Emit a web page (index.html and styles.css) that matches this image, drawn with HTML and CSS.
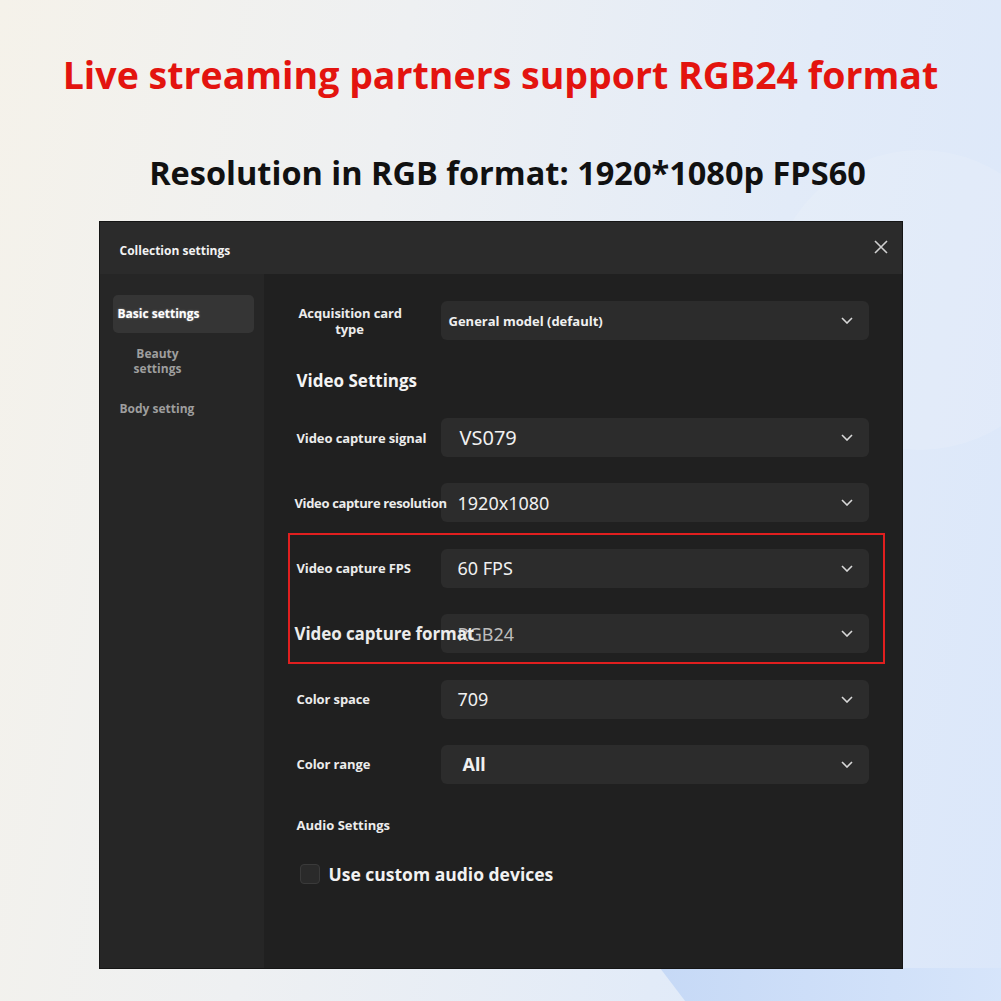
FILE: index.html
```html
<!DOCTYPE html>
<html>
<head>
<meta charset="utf-8">
<link rel="stylesheet" href="styles.css">
</head>
<body>
<div class="page">
  <div class="shape shape-a"></div>
  <div class="shape shape-b"></div>
  <h1 class="title">Live streaming partners support RGB24 format</h1>
  <h2 class="subtitle">Resolution in RGB format: 1920*1080p FPS60</h2>
  <div class="dialog">
    <div class="dialog-header">
      <span class="dialog-title">Collection settings</span>
      <svg class="close" width="14" height="14" viewBox="0 0 14 14"><path d="M1 1L13 13M13 1L1 13" stroke="#d0d0d0" stroke-width="1.6" fill="none"/></svg>
    </div>
    <div class="dialog-body">
      <div class="sidebar">
        <div class="nav-item active">Basic settings</div>
        <div class="nav-item center">Beauty<br>settings</div>
        <div class="nav-item">Body setting</div>
      </div>
      <div class="content">
        <div class="highlight"></div>
        <div class="row">
          <div class="label center">Acquisition card<br>type</div>
          <div class="select small"><span>General model (default)</span><svg class="chev" width="12" height="7" viewBox="0 0 12 7"><path d="M1 1L6 6L11 1" stroke="#d8d8d8" stroke-width="1.6" fill="none"/></svg></div>
        </div>
        <div class="section">Video Settings</div>
        <div class="rows">
          <div class="row">
            <div class="label">Video capture signal</div>
            <div class="select"><span class="large">VS079</span><svg class="chev" width="12" height="7" viewBox="0 0 12 7"><path d="M1 1L6 6L11 1" stroke="#d8d8d8" stroke-width="1.6" fill="none"/></svg></div>
          </div>
          <div class="row">
            <div class="label wide">Video capture resolution</div>
            <div class="select tight"><span>1920x1080</span><svg class="chev" width="12" height="7" viewBox="0 0 12 7"><path d="M1 1L6 6L11 1" stroke="#d8d8d8" stroke-width="1.6" fill="none"/></svg></div>
          </div>
          <div class="row">
            <div class="label">Video capture FPS</div>
            <div class="select tight"><span>60 FPS</span><svg class="chev" width="12" height="7" viewBox="0 0 12 7"><path d="M1 1L6 6L11 1" stroke="#d8d8d8" stroke-width="1.6" fill="none"/></svg></div>
          </div>
          <div class="row">
            <div class="label big">Video capture format</div>
            <div class="select tight"><span class="faded">RGB24</span><svg class="chev" width="12" height="7" viewBox="0 0 12 7"><path d="M1 1L6 6L11 1" stroke="#d8d8d8" stroke-width="1.6" fill="none"/></svg></div>
          </div>
          <div class="row">
            <div class="label">Color space</div>
            <div class="select tight"><span>709</span><svg class="chev" width="12" height="7" viewBox="0 0 12 7"><path d="M1 1L6 6L11 1" stroke="#d8d8d8" stroke-width="1.6" fill="none"/></svg></div>
          </div>
          <div class="row">
            <div class="label">Color range</div>
            <div class="select"><span class="bold">All</span><svg class="chev" width="12" height="7" viewBox="0 0 12 7"><path d="M1 1L6 6L11 1" stroke="#d8d8d8" stroke-width="1.6" fill="none"/></svg></div>
          </div>
        </div>
        <div class="audio">Audio Settings</div>
        <label class="check"><span class="box"></span><span>Use custom audio devices</span></label>
      </div>
    </div>
  </div>
</div>
</body>
</html>
```
FILE: styles.css
```css
html, body { margin: 0; padding: 0; }
body { width: 1001px; height: 1001px; overflow: hidden; }
.page {
  position: relative;
  width: 1001px;
  height: 1001px;
  background: linear-gradient(100deg, #f5f2ea 0%, #eef0f2 35%, #e2ebf8 70%, #dbe7fa 100%);
  display: flex;
  flex-direction: column;
  align-items: center;
  overflow: hidden;
  font-family: "Open Sans", Lato, sans-serif;
}
.shape { position: absolute; pointer-events: none; }
.shape-a {
  left: 660px; top: 968px; width: 380px; height: 40px;
  background: linear-gradient(90deg, #c6d9f6, #d8e6fb);
  clip-path: polygon(0 0, 100% 0, 100% 100%, 8% 100%);
}
.shape-b {
  left: 770px; top: 150px; width: 300px; height: 300px;
  border-radius: 50%;
  background: rgba(255,255,255,0.12);
}
.title {
  position: relative;
  margin: 53px 0 0;
  height: 44px;
  line-height: 44px;
  font-size: 37.5px;
  font-weight: 700;
  color: #e3140f;
}
.subtitle {
  position: relative;
  margin: 56px 0 0;
  padding-left: 14px;
  height: 40px;
  line-height: 40px;
  font-size: 32.5px;
  font-weight: 700;
  color: #111;
}
.dialog {
  position: relative;
  margin-top: 29px;
  width: 802px;
  height: 746px;
  background: #202020;
  display: flex;
  flex-direction: column;
  box-shadow: 0 0 0 1px #151515;
}
.dialog-header {
  height: 52px;
  flex: none;
  background: #2b2b2b;
  display: flex;
  align-items: center;
  justify-content: space-between;
  padding: 0 14px 0 20px;
}
.dialog-title { color: #f2f2f2; font-size: 12px; font-weight: 700; margin-top: 4px; }
.close { margin-top: -2px; }
.dialog-body { flex: 1; display: flex; }
.sidebar {
  width: 164px;
  flex: none;
  background: #262626;
  padding: 21px 10px 0 13px;
  box-sizing: border-box;
  display: flex;
  flex-direction: column;
}
.nav-item {
  font-size: 12px;
  font-weight: 700;
  color: #9e9e9e;
  padding-left: 7px;
  line-height: 15px;
}
.nav-item.active {
  height: 38px;
  line-height: 38px;
  background: #353535;
  border-radius: 5px;
  color: #fff;
  padding-left: 5px;
  text-shadow: 0 0 2px rgba(255,255,255,0.5);
}
.nav-item.center { text-align: center; padding: 13px 0 0; width: 90px; }
.nav-item:last-child { padding-top: 25px; }
.content {
  flex: 1;
  position: relative;
  padding: 27px 33px 0 31px;
}
.highlight {
  position: absolute;
  left: 24px; top: 259px;
  width: 593px; height: 127px;
  border: 2px solid #e01f1f;
}
.rows { display: flex; flex-direction: column; gap: 26.4px; }
.row { display: flex; align-items: center; height: 39px; }
.label {
  width: 146px;
  flex: none;
  padding-left: 2px;
  box-sizing: border-box;
  color: #ececec;
  font-size: 13px;
  font-weight: 700;
  white-space: nowrap;
  letter-spacing: -0.1px;
  position: relative;
  z-index: 1;
}
.label.center { text-align: center; line-height: 16px; width: 146px; padding-right: 40px; padding-left: 4px; }
.label.wide { padding-left: 0; letter-spacing: -0.35px; }
.label.big { font-size: 17px; padding-left: 0; }
.select {
  flex: 1;
  height: 39px;
  background: #2c2c2c;
  border-radius: 6px;
  display: flex;
  align-items: center;
  justify-content: space-between;
  padding: 0 16px 0 19px;
  color: #f0f0f0;
  font-family: "Noto Sans", "Open Sans", sans-serif;
  font-size: 18px;
}
.select .large { font-size: 20px; }
.select.tight { padding-left: 17px; }
.select.small { font-family: "Open Sans", sans-serif; font-size: 13px; font-weight: 700; padding-left: 8px; }
.select .bold { font-weight: 700; padding-left: 3px; }
.select .faded { color: #bdbdbd; }
.section {
  margin: 29px 0 25px 2px;
  line-height: 24px;
  color: #f4f4f4;
  font-size: 17px;
  font-weight: 700;
}
.audio {
  margin: 32px 0 0 2px;
  line-height: 18px;
  color: #ececec;
  font-size: 13px;
  font-weight: 700;
}
.check {
  display: flex;
  align-items: center;
  gap: 9px;
  margin: 28px 0 0 5px;
  color: #f2f2f2;
  font-size: 17.5px;
  font-weight: 700;
}
.box {
  width: 18px; height: 18px;
  border: 1px solid #3a3a3a;
  background: #2a2a2a;
  border-radius: 4px;
}
```
